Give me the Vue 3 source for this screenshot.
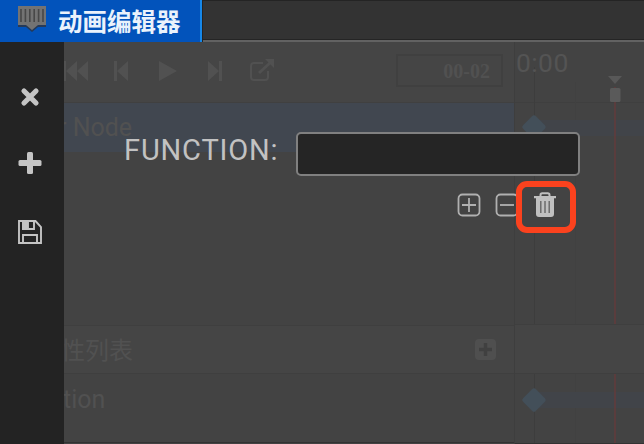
<script setup>
import { ref } from 'vue'

const functionName = ref('')
const keyframeY = { node: 85, position: 358 }
</script>

<template>
  <div class="window">
    <header class="tabs">
      <div class="tab">
        <svg class="tab-icon" width="28" height="26" viewBox="0 0 28 26">
          <path d="M0 3h28v18h-8l-6 5-6-5H0z" fill="#263a58" />
          <path d="M0 0h28v19h-8l-6 5-6-5H0z" fill="#737373" />
          <path d="M3 3v13M7.400 3v13M11.800 3v13M16.200 3v13M20.600 3v13M25 3v13" stroke="#484848" stroke-width="1.6" />
        </svg>
        <span>动画编辑器</span>
      </div>
      <div class="tab-rest"></div>
    </header>

    <main class="body">
      <nav class="side">
        <svg width="20" height="20" viewBox="0 0 20 20">
          <path d="M4 4l12 12M16 4l-12 12" stroke="#c4c4c4" stroke-width="5.2" stroke-linecap="round" />
        </svg>
        <svg width="24" height="24" viewBox="0 0 24 24" fill="#c4c4c4">
          <rect x="9" y="1" width="6" height="22" rx="1.500" />
          <rect x="0.500" y="9" width="23" height="6" rx="1.500" />
        </svg>
        <svg width="24" height="24" viewBox="0 0 24 24" fill="none" stroke="#c4c4c4" stroke-width="1.9">
          <path d="M1 1h16.500L23 7v16H1z" />
          <path d="M5 23v-8h14v8" />
          <path d="M5 1v8h11V1" />
          <path d="M5 1h5v8H5z" fill="#c4c4c4" />
        </svg>
      </nav>

      <section class="stage">
        <div class="tracks">
          <div class="toolbar">
            <svg class="transport" width="212" height="24" viewBox="0 0 212 24" fill="#515151">
              <path d="M0 2h2v20H0zM13 2v20L2 12zM24 2v20L13 12z" />
              <path d="M50 2h3v20h-3zM64 2v20L53 12z" />
              <path d="M95 2v20l18-10z" />
              <path d="M144 2v20l11-10zM155 2h3v20h-3z" />
              <path d="M199 4h-9q-3 0-3 3v11q0 3 3 3h11q3 0 3-3v-6" fill="none" stroke="#515151" stroke-width="2" />
              <path d="M195 14L207 3" fill="none" stroke="#515151" stroke-width="3" />
              <path d="M201 0h9v9z" />
            </svg>
            <div class="frame">00-02</div>
          </div>
          <div class="node-row"><span>r Node</span></div>
          <div class="space"></div>
          <div class="prop-head">
            <span>性列表</span>
            <svg width="21" height="21" viewBox="0 0 21 21">
              <rect width="21" height="21" rx="4" fill="#4f4f4f" />
              <path d="M10.500 4v13M4 10.500h13" stroke="#404040" stroke-width="3.500" />
            </svg>
          </div>
          <div class="prop-row"><span>tion</span></div>
        </div>

        <div class="timeline">
          <svg width="129" height="401" viewBox="0 0 129 401">
            <path d="M0 60.500h129" stroke="#3f3f3f" />
            <path d="M19.500 25v376" stroke="#3d3d3d" />
            <path d="M60.500 40v361" stroke="#414141" />
            <rect x="20" y="78" width="109" height="16" fill="#414449" />
            <rect x="20" y="350" width="109" height="16" fill="#414449" />
            <path d="M100 45v356" stroke="#613c3d" stroke-width="1.600" />
            <rect x="0" y="283" width="129" height="49" fill="#454545" />
            <path d="M0 282.500h129M0 331.500h129" stroke="#3f3f3f" />
            <rect
              v-for="y in keyframeY" :key="y"
              x="-9" y="-9" width="18" height="18" rx="2.5" fill="#434f59"
              :transform="`translate(19 ${y}) rotate(45)`"
            />
            <path d="M93 34h14l-7 8z" fill="#585858" />
            <rect x="95" y="46" width="10.500" height="14" rx="1.500" fill="#5a5a5a" />
          </svg>
          <span class="time">0:00</span>
        </div>

        <form class="dialog" @submit.prevent>
          <div class="field">
            <label for="fn">FUNCTION:</label>
            <input id="fn" v-model="functionName" type="text" autocomplete="off" />
          </div>
          <div class="actions">
            <svg width="24" height="24" viewBox="0 0 24 24" fill="none" stroke="#b0b0b0" stroke-width="1.800">
              <rect x="1.500" y="1.500" width="21" height="21" rx="4" />
              <path d="M12 5v14M5 12h14" />
            </svg>
            <svg width="24" height="24" viewBox="0 0 24 24" fill="none" stroke="#b0b0b0" stroke-width="1.800">
              <rect x="1.500" y="1.500" width="21" height="21" rx="4" />
              <path d="M5 12h14" />
            </svg>
            <span class="trash">
              <svg width="22" height="25" viewBox="0 0 22 25">
                <path d="M6.500 4V3q0-1.800 1.800-1.800h5.400q1.800 0 1.800 1.800v1" fill="none" stroke="#c0c0c0" stroke-width="2" />
                <path d="M0 4h22v2.200h-2V22q0 3-3 3H5q-3 0-3-3V6.200H0z" fill="#c0c0c0" />
                <path d="M6.800 9v12M11 9v12M15.200 9v12" stroke="#666" stroke-width="1.400" />
              </svg>
            </span>
          </div>
        </form>
      </section>
    </main>
  </div>
</template>

<style>
body {
  margin: 0;
  background: #434343;
}
</style>

<style scoped>
.window {
  width: 644px;
  height: 444px;
  overflow: hidden;
  display: flex;
  flex-direction: column;
  font-family: Roboto, "Noto Sans CJK SC", sans-serif;
}
.tabs {
  display: flex;
  height: 42px;
}
.tab {
  box-sizing: border-box;
  width: 202px;
  display: flex;
  align-items: center;
  gap: 12px;
  padding-left: 18px;
  background: #0253bb;
  border-right: 2px solid #1687e8;
  color: #eaf2fc;
  font: 700 24.5px/42px "Noto Sans CJK SC", sans-serif;
  white-space: nowrap;
}
.tab-icon {
  margin-top: -5px;
}
.tab-rest {
  flex: 1;
  box-sizing: border-box;
  background: #333;
  border: solid #242424;
  border-width: 1px 0 0 1px;
  box-shadow: inset 0 -2px #626262, inset 0 -3px #252525;
}
.body {
  flex: 1;
  display: flex;
}
.side {
  width: 64px;
  box-sizing: border-box;
  background: #232323;
  display: flex;
  flex-direction: column;
  align-items: center;
  padding: 45px 4px 0 0;
  gap: 45px;
}
.side svg:nth-child(2) {
  margin-top: -1px;
}
.stage {
  position: relative;
  width: 580px;
  display: flex;
  overflow: hidden;
  background: #434343;
}
.tracks {
  width: 450px;
  display: flex;
  flex-direction: column;
  color: #515151;
  font-size: 25px;
}
.toolbar {
  height: 61px;
  box-sizing: border-box;
  display: flex;
  align-items: center;
  justify-content: space-between;
  padding: 0 11px 3px 0;
  background: #454545;
  border-bottom: 1px solid #404040;
}
.frame {
  box-sizing: border-box;
  width: 107px;
  height: 33px;
  padding-right: 11px;
  border: 2px solid #404040;
  font: 700 20px/30px "Liberation Serif", serif;
  text-align: right;
}
.node-row {
  height: 49px;
  background: #414750;
  line-height: 49px;
  display: flex;
}
.node-row span {
  margin-left: -6px;
}
.space {
  height: 173px;
}
.prop-head {
  height: 49px;
  box-sizing: border-box;
  display: flex;
  align-items: center;
  justify-content: space-between;
  padding-right: 18px;
  background: #454545;
  border: solid #3f3f3f;
  border-width: 1px 0;
  font: 24px/46px "Noto Sans CJK SC", sans-serif;
}
.prop-head span {
  margin: -2px 0 0 -3px;
}
.prop-row {
  height: 68px;
  display: flex;
  line-height: 51px;
  border-bottom: 1px solid #333;
}
.prop-row span {
  margin-left: -1px;
}
.timeline {
  position: relative;
  width: 129px;
  border-left: 1px solid #3e3e3e;
}
.timeline svg {
  display: block;
  border-bottom: 1px solid #333;
}
.time {
  position: absolute;
  left: 1px;
  top: 6px;
  font-size: 26.5px;
  line-height: 30px;
  letter-spacing: 0.4px;
  color: #545454;
}
.dialog {
  position: absolute;
  inset: 90px 64px auto 60px;
  display: flex;
  flex-direction: column;
}
.field {
  display: flex;
  align-items: center;
  justify-content: space-between;
  height: 44px;
}
label {
  color: #c2c2c2;
  font-size: 29px;
  line-height: 36px;
  letter-spacing: 0.85px;
  margin-top: -8px;
}
input {
  box-sizing: border-box;
  width: 284px;
  height: 44px;
  border: 2px solid #808080;
  border-radius: 5px;
  background: #252525;
  outline: none;
  padding: 0 10px;
  color: #c5c5c5;
  font: 24px Roboto, sans-serif;
}
.actions {
  display: flex;
  align-items: center;
  justify-content: flex-end;
  gap: 14px;
  height: 52px;
  margin-top: 5px;
  padding-right: 4px;
}
.actions > svg {
  margin-top: -4px;
}
.actions > svg:nth-child(2) {
  margin-right: -1px;
}
.trash {
  box-sizing: border-box;
  width: 60px;
  height: 52px;
  margin-left: -16px;
  border: 6px solid #fb421e;
  border-radius: 11px;
  display: flex;
  justify-content: center;
  padding: 5px 2px 0 0;
  background: #434343;
}
</style>
